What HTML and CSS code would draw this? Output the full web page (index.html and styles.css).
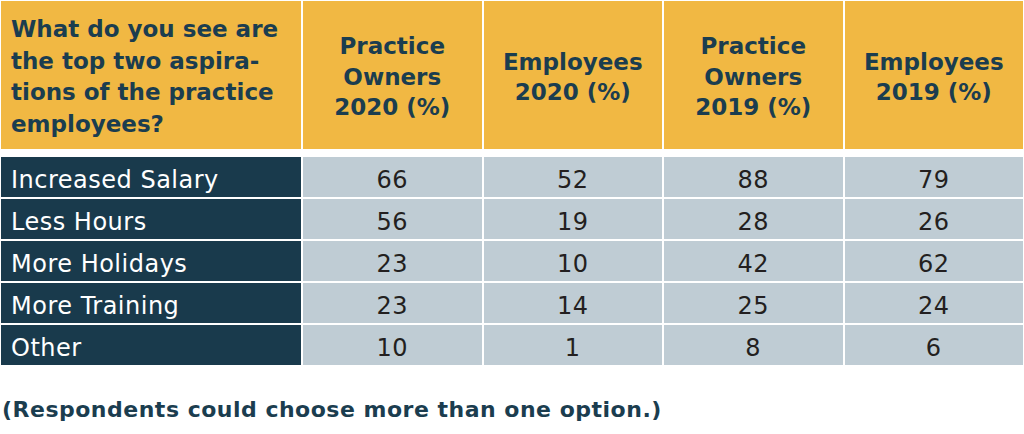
FILE: index.html
```html
<!DOCTYPE html>
<html>
<head>
<meta charset="utf-8">
<link rel="stylesheet" href="styles.css">
</head>
<body>
<div class="tbl">
  <div class="h q">What do you see are<br>the top two aspira-<br>tions of the practice<br>employees?</div>
  <div class="h">Practice<br>Owners<br>2020 (%)</div>
  <div class="h">Employees<br>2020 (%)</div>
  <div class="h">Practice<br>Owners<br>2019 (%)</div>
  <div class="h">Employees<br>2019 (%)</div>

  <div class="lbl">Increased Salary</div><div class="num">66</div><div class="num">52</div><div class="num">88</div><div class="num">79</div>
  <div class="lbl">Less Hours</div><div class="num">56</div><div class="num">19</div><div class="num">28</div><div class="num">26</div>
  <div class="lbl">More Holidays</div><div class="num">23</div><div class="num">10</div><div class="num">42</div><div class="num">62</div>
  <div class="lbl">More Training</div><div class="num">23</div><div class="num">14</div><div class="num">25</div><div class="num">24</div>
  <div class="lbl">Other</div><div class="num">10</div><div class="num">1</div><div class="num">8</div><div class="num">6</div>
</div>
<p class="note">(Respondents could choose more than one option.)</p>
</body>
</html>
```

FILE: styles.css
```css
html, body {
  margin: 0;
  padding: 0;
  background: #ffffff;
}

body {
  width: 1024px;
  height: 434px;
  overflow: hidden;
  font-family: "DejaVu Sans", "Liberation Sans", sans-serif;
}

.tbl {
  display: grid;
  grid-template-columns: 300px repeat(4, 1fr);
  grid-template-rows: 154px;
  grid-auto-rows: 40px;
  gap: 2px;
  padding: 1px;
  width: 1024px;
  box-sizing: border-box;
}

.h {
  background: #f1b843;
  color: #1b3d4f;
  font-weight: bold;
  font-size: 23px;
  line-height: 30.5px;
  margin-bottom: 6px;
  padding-top: 4px;
  display: flex;
  align-items: center;
  justify-content: center;
  text-align: center;
}

.h.q {
  justify-content: flex-start;
  text-align: left;
  line-height: 31.5px;
  padding-left: 10px;
}

.lbl {
  background: #193a4c;
  color: #ffffff;
  font-size: 24px;
  letter-spacing: 0.5px;
  display: flex;
  align-items: center;
  padding: 5px 0 0 10px;
}

.num {
  background: #bfccd4;
  color: #231f20;
  font-size: 24px;
  letter-spacing: 0.5px;
  display: flex;
  align-items: center;
  justify-content: center;
  padding-top: 5px;
}

.note {
  margin: 31px 0 0 2px;
  font-size: 22px;
  line-height: 26px;
  letter-spacing: 0.5px;
  font-weight: bold;
  color: #1b3d4f;
}
```
